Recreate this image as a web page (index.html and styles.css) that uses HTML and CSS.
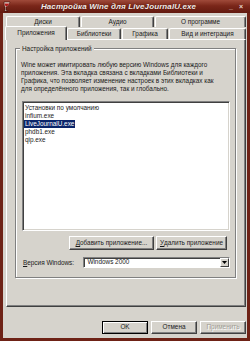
FILE: index.html
```
<!DOCTYPE html>
<html>
<head>
<meta charset="utf-8">
<link rel="stylesheet" href="styles.css">
</head>
<body>
<div class="window">
  <div class="titlebar">
    <svg class="app-icon" width="8" height="11" viewBox="0 0 8 11">
      <path d="M1 1 L7 1 L6 4 Q4 6 3 6 L3 9 L5 10 L1 10 L2 9 L2 6 Q1 5 1 1 Z" fill="#f0e0d8" stroke="#3a0a05" stroke-width="0.6"/>
      <path d="M1.5 2.5 L6.5 2.5 L5.5 4 Q4 5.5 3 5.5 Q1.8 4.6 1.5 2.5 Z" fill="#b01818"/>
    </svg>
    <span class="title">Настройка Wine для LiveJournalU.exe</span>
    <span class="tb-btn">_</span>
    <span class="tb-btn">×</span>
  </div>
  <div class="content">
    <div class="tabrow row1">
      <div class="tab w-disk">Диски</div>
      <div class="tab w-audio">Аудио</div>
      <div class="tab w-about">О программе</div>
    </div>
    <div class="tabrow row2">
      <div class="tab sel w-apps">Приложения</div>
      <div class="tab w-libs">Библиотеки</div>
      <div class="tab w-gfx">Графика</div>
      <div class="tab w-view">Вид и интеграция</div>
    </div>
    <div class="panel">
      <div class="group">
        <div class="legend">Настройка приложений</div>
        <p class="desc">Wine может имитировать любую версию Windows для каждого<br>приложения. Эта вкладка связана с вкладками Библиотеки и<br>Графика, что позволяет изменение настроек в этих вкладках как<br>для определённого приложения, так и глобально.</p>
        <div class="listbox">
          <div class="item">Установки по умолчанию</div>
          <div class="item">infium.exe</div>
          <div class="item"><span class="hl">LiveJournalU.exe</span></div>
          <div class="item">phdb1.exe</div>
          <div class="item">qip.exe</div>
        </div>
        <div class="btnrow">
          <div class="btn w-add"><u>Д</u>обавить приложение...</div>
          <div class="btn w-del"><u>У</u>далить приложение</div>
        </div>
        <div class="verrow">
          <span class="verlabel"><u>В</u>ерсия Windows:</span>
          <div class="combo">
            <span class="combo-text">Windows 2000</span>
            <span class="combo-btn"><svg width="5" height="3" viewBox="0 0 5 3"><path d="M0 0 H5 L2.5 3 Z" fill="#000"/></svg></span>
          </div>
        </div>
      </div>
    </div>
    <div class="footer">
      <div class="btn fbtn default">OK</div>
      <div class="btn fbtn">Отмена</div>
      <div class="btn fbtn disabled">Применить</div>
    </div>
  </div>
</div>
</body>
</html>
```
FILE: styles.css
```
* { box-sizing: border-box; }
html, body { margin: 0; padding: 0; background: #ffffff; }
body { font-family: "Liberation Sans", Arial, sans-serif; font-size: 6.4px; color: #1a1a1a; }

.window {
  width: 250px;
  height: 341px;
  background: #d6d3cc;
  border: solid #6e2216;
  border-width: 0 3px 3px 3px;
  display: flex;
  flex-direction: column;
}

.titlebar {
  height: 13px;
  margin: 0 -3px;
  background: linear-gradient(to bottom, #a04a3a 0%, #7a2619 45%, #621a10 100%);
  display: flex;
  align-items: center;
  padding: 0 4px 0 3px;
  color: #fff;
}
.app-icon { flex: none; }
.title {
  flex: 1;
  text-align: center;
  font-weight: bold;
  font-style: italic;
  font-size: 8px;
  letter-spacing: 0.1px;
  color: #f4ece8;
  text-shadow: 0 0 1px #3a0a05;
}
.tb-btn {
  width: 10px;
  text-align: center;
  font-size: 7px;
  font-weight: bold;
  color: #e8d8d0;
}

.content {
  flex: 1;
  padding: 3px 1px 0 3px;
  display: flex;
  flex-direction: column;
}

.tabrow { display: flex; gap: 1px; }
.row1 { height: 11px; }
.row2 { height: 12px; position: relative; z-index: 2; }
.tab {
  background: #d6d3cc;
  border-top: 1px solid #ffffff;
  border-left: 1px solid #ffffff;
  border-right: 1px solid #404040;
  box-shadow: inset -1px 0 0 #808080;
  border-radius: 2px 2px 0 0;
  display: flex;
  align-items: center;
  justify-content: center;
  line-height: 1;
  white-space: nowrap;
}
.w-disk { width: 74px; }
.w-audio { width: 73px; }
.w-about { flex: 1; }
.w-apps { width: 60px; }
.w-libs { width: 54px; }
.w-gfx { width: 46px; }
.w-view { flex: 1; }
.row2 .tab { margin-top: 1px; }
.tab.sel {
  margin-top: -1px;
  margin-left: -1px;
  width: 62px;
  height: 14px;
  margin-right: -1px;
  padding-bottom: 1px;
}

.panel {
  height: 268px;
  border-top: 1px solid #ffffff;
  border-left: 1px solid #ffffff;
  border-right: 1px solid #404040;
  border-bottom: 1px solid #404040;
  box-shadow: inset -1px -1px 0 #808080;
  padding: 8px 9px 0 8px;
}

.group {
  position: relative;
  height: 230px;
  border: 1px solid #808080;
  box-shadow: inset 1px 1px 0 #ffffff, 1px 1px 0 #ffffff;
  padding: 12px 5px 0 5px;
  display: flex;
  flex-direction: column;
}
.legend {
  position: absolute;
  top: -5px;
  left: 4px;
  padding: 0 2px;
  background: #d6d3cc;
  line-height: 9px;
}
.desc {
  margin: 0;
  line-height: 8px;
  white-space: nowrap;
}

.listbox {
  margin-top: 8px;
  margin-left: 1px;
  height: 130px;
  background: #ffffff;
  border-top: 1px solid #808080;
  border-left: 1px solid #808080;
  border-right: 1px solid #ffffff;
  border-bottom: 1px solid #ffffff;
  box-shadow: inset 1px 1px 0 #404040, inset -1px -1px 0 #d6d3cc;
  padding: 2px 2px;
}
.item { line-height: 8px; height: 8px; white-space: nowrap; }
.hl { background: #0a246a; color: #fff; display: inline-block; padding: 0 1px; margin-left: -1px; }

.btnrow {
  margin-top: 5px;
  display: flex;
  justify-content: flex-end;
  gap: 2px;
  padding-right: 3px;
}
.btn {
  height: 14px;
  background: #d6d3cc;
  border-top: 1px solid #ffffff;
  border-left: 1px solid #ffffff;
  border-right: 1px solid #404040;
  border-bottom: 1px solid #404040;
  box-shadow: inset -1px -1px 0 #808080;
  display: flex;
  align-items: center;
  justify-content: center;
  white-space: nowrap;
  line-height: 1;
}
.w-add { width: 85px; }
.w-del { width: 71px; }

.verrow {
  margin-top: 7px;
  display: flex;
  align-items: center;
  padding-left: 2px;
}
.verlabel { width: 61px; }
.combo {
  width: 148px;
  height: 11px;
  background: #fff;
  border-top: 1px solid #808080;
  border-left: 1px solid #808080;
  border-right: 1px solid #ffffff;
  border-bottom: 1px solid #ffffff;
  box-shadow: inset 1px 1px 0 #404040;
  display: flex;
  align-items: center;
}
.combo-text { flex: 1; padding-left: 3px; line-height: 1; }
.combo-btn {
  width: 9px;
  height: 9px;
  background: #d6d3cc;
  border-top: 1px solid #ffffff;
  border-left: 1px solid #ffffff;
  border-right: 1px solid #404040;
  border-bottom: 1px solid #404040;
  display: flex;
  align-items: center;
  justify-content: center;
}

.footer {
  margin-top: 14px;
  display: flex;
  justify-content: flex-end;
  gap: 3px;
}
.fbtn { width: 46px; height: 13px; }
.fbtn.default { border: 1px solid #000; box-shadow: inset 1px 1px 0 #fff, inset -1px -1px 0 #808080; }
.fbtn.disabled { color: #a09c94; text-shadow: 1px 1px 0 #ffffff; }
```
